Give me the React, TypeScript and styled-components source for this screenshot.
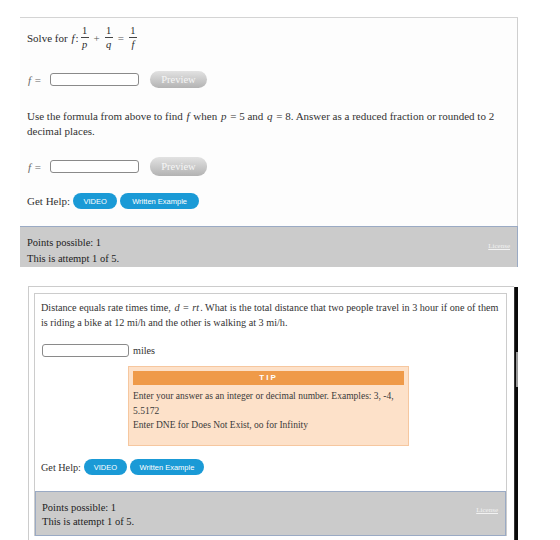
import styled, { createGlobalStyle } from 'styled-components';

const GlobalStyle = createGlobalStyle`
  body {
    margin: 0;
    background: #ffffff;
    font-family: "Liberation Serif", "Times New Roman", serif;
    color: #2b2b2b;
  }
`;

const Page = styled.div`
  width: 560px;
  height: 540px;
  overflow: hidden;
  padding-top: 17px;
  box-sizing: border-box;
`;

/* first question: bare card with a top rule */
const QuestionCard = styled.div`
  margin-left: 20px;
  width: 498px;
  border-top: 1px solid #d4d4d4;
`;

const CardBody = styled.div`
  border-right: 1px solid #cfcfcf;
  padding: 7px 7px 17px 7px;
  background: #fdfdfd;
  font-size: 11px;
`;

const QuestionLine = styled.div`
  display: flex;
  align-items: center;
  height: 26px;
`;

const Frac = styled.span`
  display: inline-flex;
  flex-direction: column;
  align-items: center;
  font-size: 10.5px;
  line-height: 10px;
  margin: 0 2px;
`;

const FracBar = styled.span`
  align-self: stretch;
  min-width: 8px;
  height: 1px;
  background: #444;
  margin: 1px 0 2px;
`;

const Var = styled.i`
  font-family: "Liberation Serif", serif;
  font-style: italic;
  padding: 0 1px;
`;

const Op = styled.span`
  color: #555;
  margin: 0 3px;
`;

const AnswerRow = styled.div<{ $top: number }>`
  display: flex;
  align-items: center;
  height: 17px;
  margin-top: ${p => p.$top}px;
`;

const MathLabel = styled.span`
  color: #666;
  width: 23px;
  flex-shrink: 0;
`;

const AnswerInput = styled.div<{ $width: number }>`
  width: ${p => p.$width}px;
  height: 13px;
  border: 1px solid #8a8a8a;
  border-radius: 3px;
  background: #fff;
  box-sizing: border-box;
  flex-shrink: 0;
`;

const PreviewButton = styled.button<{ $h: number }>`
  margin-left: 11px;
  width: 57px;
  height: ${p => p.$h}px;
  border: none;
  border-radius: 9px;
  background: linear-gradient(#e2e2e2, #b3b3b3);
  color: #f6f6f6;
  font-family: "Liberation Serif", serif;
  font-size: 10.5px;
  padding: 0;
`;

const Prose = styled.p<{ $top: number }>`
  margin: ${p => p.$top}px 0 0;
  line-height: 15px;
  color: #333;
`;

const HelpRow = styled.div<{ $top: number }>`
  display: flex;
  align-items: center;
  gap: 3px;
  margin-top: ${p => p.$top}px;
  color: #333;
`;

const HelpButton = styled.button<{ $width: number }>`
  width: ${p => p.$width}px;
  height: 16px;
  border: none;
  border-radius: 8px;
  background: #1a9ad6;
  color: #ffffff;
  font-family: "Liberation Sans", Arial, sans-serif;
  font-size: 7.5px;
  padding: 0;
`;

const Footer = styled.div<{ $boxed?: boolean }>`
  position: relative;
  background: #cbcbcb;
  border-top: 1px solid #9aaac4;
  border-right: 1px solid #9aaac4;
  border-left: ${p => (p.$boxed ? '1px solid #9aaac4' : 'none')};
  border-bottom: ${p => (p.$boxed ? '1px solid #9aaac4' : 'none')};
  padding: ${p => (p.$boxed ? '9px 6px 6px' : '8px 7px 0')};
  line-height: ${p => (p.$boxed ? '14px' : '16px')};
  font-size: 10.5px;
  color: #222;
`;

const LicenseLink = styled.a`
  position: absolute;
  right: 7px;
  top: 11px;
  font-size: 7px;
  color: #f2f2f2;
  text-decoration: underline;
`;

/* second question: framed embed with its scrollbar alongside */
const EmbedRow = styled.div`
  display: flex;
  align-items: stretch;
  margin: 19px 0 0 28px;
`;

const EmbedFrame = styled.div`
  width: 486px;
  box-sizing: border-box;
  border-top: 1px solid #cccccc;
  border-left: 1px solid #cccccc;
  padding: 6px 7px 10px 5px;
`;

const ScrollTrack = styled.div`
  width: 4px;
  min-width: 4px;
  margin-top: 1px;
  background-color: #0a0a0a;
  border-left: 1px solid #333;
  box-sizing: border-box;
  display: flex;
  justify-content: center;
`;

const ScrollThumb = styled.div`
  width: 2px;
  height: 35px;
  margin-top: 65px;
  background-color: #9a9a9a;
`;

const InnerCard = styled.div`
  border: 1px solid #cccccc;
  border-bottom: none;
  font-size: 10.2px;
`;

const InnerBody = styled.div`
  padding: 6px 6px 16px 6px;
  background: #fff;
`;

const UnitRow = styled.div`
  display: flex;
  align-items: center;
  gap: 4px;
  margin-top: 13px;
  margin-left: 1px;
  height: 15px;
  color: #333;
`;

const TipBox = styled.div`
  margin: 8px 0 0 87px;
  width: 281px;
  height: 80px;
  box-sizing: border-box;
  padding: 4px;
  background: #fde1c9;
  border: 1px solid #f6c79f;
`;

const TipHeader = styled.div`
  height: 14px;
  background: #ef9a49;
  color: #fff;
  font-family: "Liberation Sans", Arial, sans-serif;
  font-weight: bold;
  font-size: 8px;
  letter-spacing: 2px;
  line-height: 14px;
  text-align: center;
`;

const TipText = styled.div`
  margin-top: 4px;
  line-height: 14.5px;
  font-size: 9.5px;
  color: #3a3a3a;
`;

const One = () => <span>1</span>;

export default function App() {
  return (
    <Page>
      <GlobalStyle />
      <QuestionCard>
        <CardBody>
          <QuestionLine>
            <span>Solve for <Var>f</Var>:</span>
            <Frac><One /><FracBar /><Var>p</Var></Frac>
            <Op>+</Op>
            <Frac><One /><FracBar /><Var>q</Var></Frac>
            <Op>=</Op>
            <Frac><One /><FracBar /><Var>f</Var></Frac>
          </QuestionLine>
          <AnswerRow $top={20}>
            <MathLabel><Var>f</Var> =</MathLabel>
            <AnswerInput $width={89} />
            <PreviewButton $h={17}>Preview</PreviewButton>
          </AnswerRow>
          <Prose $top={21}>
            Use the formula from above to find <Var>f</Var> when <Var>p</Var> = 5 and <Var>q</Var> = 8. Answer as a
            reduced fraction or rounded to 2 decimal places.
          </Prose>
          <AnswerRow $top={19}>
            <MathLabel><Var>f</Var> =</MathLabel>
            <AnswerInput $width={89} />
            <PreviewButton $h={19}>Preview</PreviewButton>
          </AnswerRow>
          <HelpRow $top={18}>
            <span>Get Help:</span>
            <HelpButton $width={44}>VIDEO</HelpButton>
            <HelpButton $width={79}>Written Example</HelpButton>
          </HelpRow>
        </CardBody>
        <Footer>
          Points possible: 1
          <br />
          This is attempt 1 of 5.
          <LicenseLink>License</LicenseLink>
        </Footer>
      </QuestionCard>

      <EmbedRow>
        <EmbedFrame>
          <InnerCard>
            <InnerBody>
              <Prose $top={0}>
                Distance equals rate times time, <Var>d</Var> = <Var>rt</Var>. What is the total distance that two
                people travel in 3 hour if one of them is riding a bike at 12 mi/h and the other is walking at 3 mi/h.
              </Prose>
              <UnitRow>
                <AnswerInput $width={87} />
                <span>miles</span>
              </UnitRow>
              <TipBox>
                <TipHeader>TIP</TipHeader>
                <TipText>
                  Enter your answer as an integer or decimal number. Examples: 3, -4, 5.5172
                  <br />
                  Enter DNE for Does Not Exist, oo for Infinity
                </TipText>
              </TipBox>
              <HelpRow $top={13}>
                <span>Get Help:</span>
                <HelpButton $width={43}>VIDEO</HelpButton>
                <HelpButton $width={74}>Written Example</HelpButton>
              </HelpRow>
            </InnerBody>
            <Footer $boxed>
              Points possible: 1
              <br />
              This is attempt 1 of 5.
              <LicenseLink>License</LicenseLink>
            </Footer>
          </InnerCard>
        </EmbedFrame>
        <ScrollTrack>
          <ScrollThumb />
        </ScrollTrack>
      </EmbedRow>
    </Page>
  );
}
